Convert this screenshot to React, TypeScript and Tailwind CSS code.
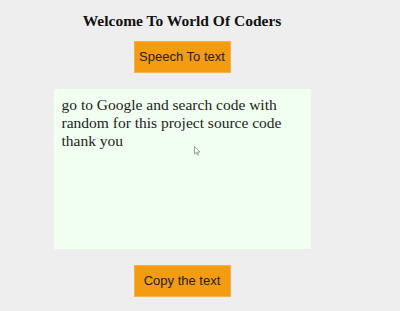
import React from "react";

export default function App() {
  return (
    <div className="w-[400px] h-[311px] bg-[#eeeeee] overflow-hidden relative">
      <div className="w-[364px] flex flex-col items-center">
        <h3 className="mt-[11px] text-[15.5px] leading-[20px] font-bold text-[#111] [font-family:'Liberation_Serif',serif]">
          Welcome To World Of Coders
        </h3>
        <button className="mt-[10px] w-[97px] h-[32px] bg-[#f39c12] border border-[#f5b04a] text-[13px] text-[#222] [font-family:'Liberation_Sans',Arial,sans-serif]">
          Speech To text
        </button>
        <div className="mt-[16px] w-[257px] h-[160px] bg-[#f0fff0] pl-[8px] pr-[6px] pt-[7px] text-[15.5px] leading-[18px] text-[#222] [font-family:'Liberation_Serif',serif]">
          go to Google and search code with random for this project source code thank you
        </div>
        <button className="mt-[16px] w-[97px] h-[32px] bg-[#f39c12] border border-[#f5b04a] text-[13px] text-[#222] [font-family:'Liberation_Sans',Arial,sans-serif]">
          Copy the text
        </button>
      </div>
      <svg className="absolute left-[194px] top-[146px]" width="7" height="10" viewBox="0 0 7 10">
        <path d="M0.5 0.5 L0.5 8 L2.3 6.3 L3.6 9.2 L4.6 8.8 L3.4 6 L6 6 Z" fill="#fff" stroke="#888" strokeWidth="0.8" />
      </svg>
    </div>
  );
}
